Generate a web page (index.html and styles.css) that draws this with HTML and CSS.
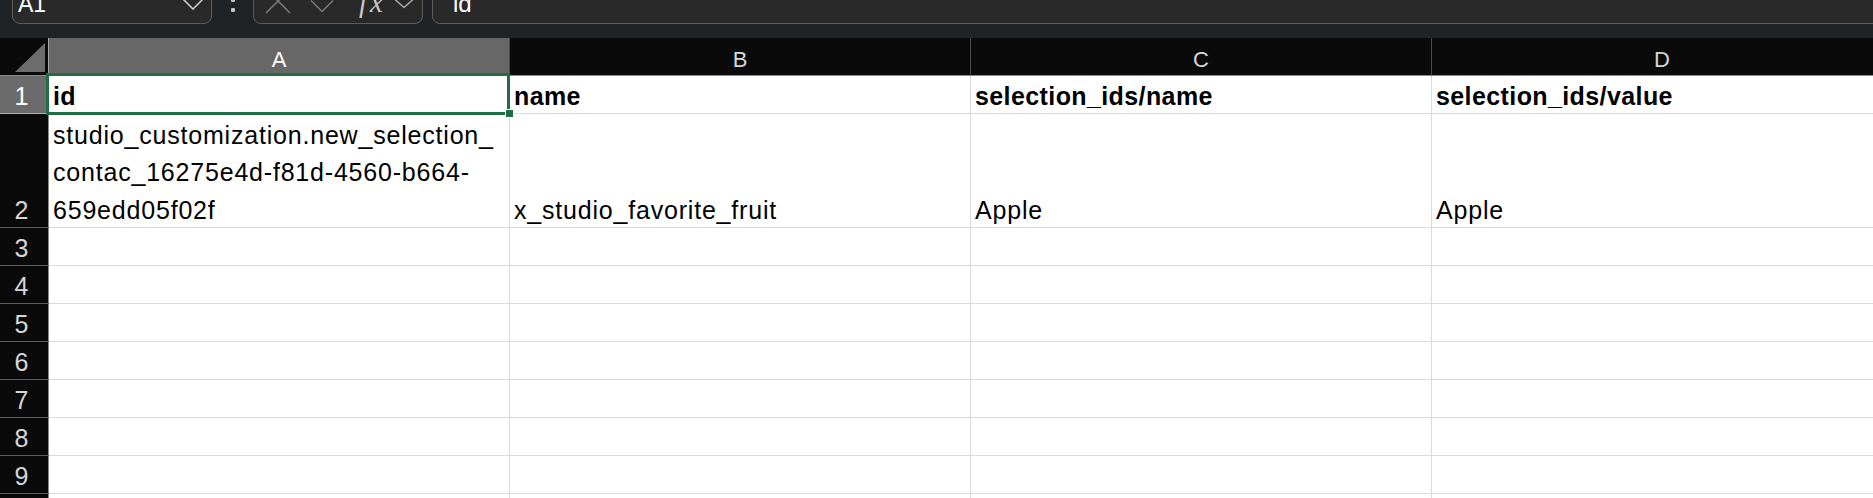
FILE: index.html
```html
<!DOCTYPE html>
<html>
<head>
<meta charset="utf-8">
<title>Sheet</title>
<link rel="stylesheet" href="styles.css">
</head>
<body>
<div class="app">
  <div class="toolbar">
    <div class="box namebox">
      <span class="ref">A1</span>
      <svg class="chev-name" width="22" height="12" viewBox="0 0 22 12"><path d="M1 1 L11 11 L21 1"/></svg>
    </div>
    <div class="kebab"><i></i><i></i></div>
    <div class="box fnbox">
      <svg class="ico-x" width="26" height="26" viewBox="0 0 26 26"><path d="M1 1 L25 25 M25 1 L1 25"/></svg>
      <svg class="ico-check" width="24" height="14" viewBox="0 0 24 14"><path d="M1 1.5 L12 12.5 L23 1.5"/></svg>
      <span class="fx">fx</span>
      <svg class="chev-fx" width="20" height="10" viewBox="0 0 20 10"><path d="M1 0.5 L10 8.5 L19 0.5"/></svg>
    </div>
    <div class="box formula"><span class="ftext">id</span></div>
  </div>

  <div class="sheet">
    <div class="corner"><svg width="48" height="37" viewBox="0 0 48 37"><polygon points="15,34 45,34 45,5" /></svg></div>
    <div class="ch sel">A</div>
    <div class="ch">B</div>
    <div class="ch">C</div>
    <div class="ch">D</div>

    <div class="rh sel"><span>1</span></div>
    <div class="c b"><span>id</span></div>
    <div class="c b"><span>name</span></div>
    <div class="c b"><span>selection_ids/name</span></div>
    <div class="c b"><span>selection_ids/value</span></div>

    <div class="rh"><span>2</span></div>
    <div class="c"><span>studio_customization.new_selection_<br>contac_16275e4d-f81d-4560-b664-<br>659edd05f02f</span></div>
    <div class="c"><span>x_studio_favorite_fruit</span></div>
    <div class="c"><span>Apple</span></div>
    <div class="c"><span>Apple</span></div>

    <div class="rh"><span>3</span></div><div class="c"></div><div class="c"></div><div class="c"></div><div class="c"></div>
    <div class="rh"><span>4</span></div><div class="c"></div><div class="c"></div><div class="c"></div><div class="c"></div>
    <div class="rh"><span>5</span></div><div class="c"></div><div class="c"></div><div class="c"></div><div class="c"></div>
    <div class="rh"><span>6</span></div><div class="c"></div><div class="c"></div><div class="c"></div><div class="c"></div>
    <div class="rh"><span>7</span></div><div class="c"></div><div class="c"></div><div class="c"></div><div class="c"></div>
    <div class="rh"><span>8</span></div><div class="c"></div><div class="c"></div><div class="c"></div><div class="c"></div>
    <div class="rh"><span>9</span></div><div class="c"></div><div class="c"></div><div class="c"></div><div class="c"></div>
    <div class="rh"><span>10</span></div><div class="c"></div><div class="c"></div><div class="c"></div><div class="c"></div>

    <div class="selection"><i class="handle"></i></div>
  </div>
</div>
</body>
</html>
```
FILE: styles.css
```css
html, body {
  margin: 0;
  padding: 0;
  background: #1f2326;
  overflow: hidden;
}

.app {
  width: 1873px;
  height: 498px;
  overflow: hidden;
  font-family: "Liberation Sans", Arial, sans-serif;
}

/* ---------- toolbar ---------- */
.toolbar {
  height: 38px;
  box-sizing: border-box;
  display: flex;
  align-items: flex-start;
  padding-left: 12px;
  background: #1f2326;
  overflow: hidden;
}

.box {
  box-sizing: border-box;
  height: 36px;
  margin-top: -12px;
  border: 1px solid #5d5d5d;
  border-radius: 8px;
  background: #292929;
  display: flex;
  align-items: flex-start;
  flex-shrink: 0;
}

.namebox {
  width: 200px;
  padding-left: 5px;
}

.ref {
  font-size: 23px;
  line-height: 30px;
  color: #ffffff;
}

.chev-name {
  margin-left: auto;
  margin-right: 7px;
  margin-top: 9px;
}

.chev-name path,
.chev-fx path,
.ico-x path,
.ico-check path {
  fill: none;
  stroke-width: 1.5;
}

.chev-name path { stroke: #cfcfcf; }
.chev-fx path { stroke: #a8a8a8; }
.ico-x path, .ico-check path { stroke: #7a7a7a; }

.kebab {
  width: 4px;
  margin-left: 19px;
  margin-top: -2px;
  display: flex;
  flex-direction: column;
  gap: 6px;
  flex-shrink: 0;
}

.kebab i {
  display: block;
  width: 4px;
  height: 4px;
  border-radius: 1px;
  background: #c4c4c4;
}

.fnbox {
  width: 170px;
  margin-left: 18px;
}

.ico-x {
  margin-left: 11px;
  margin-top: -1px;
}

.ico-check {
  margin-left: 19px;
  margin-top: 10px;
}

.fx {
  margin-left: 25px;
  margin-top: -1px;
  font-family: "Liberation Serif", "Times New Roman", serif;
  font-style: italic;
  font-size: 29px;
  line-height: 28px;
  letter-spacing: 3px;
  color: #c8c8c8;
}

.chev-fx {
  margin-left: 8px;
  margin-top: 10px;
}

.formula {
  flex: 1;
  margin-left: 9px;
  margin-right: -20px;
  padding-left: 20px;
}

.ftext {
  font-size: 24px;
  line-height: 30px;
  color: #ffffff;
}

/* ---------- sheet ---------- */
.sheet {
  position: relative;
  display: grid;
  grid-template-columns: 49px repeat(4, 461px);
  grid-template-rows: 38px 38px 114px repeat(8, 38px);
  height: 460px;
  overflow: hidden;
  background: #ffffff;
}

.corner {
  background: #0a0a0a;
  border-right: 1px solid #a8a8a8;
  border-bottom: 1px solid #8c8c8c;
  box-sizing: border-box;
}

.corner svg {
  display: block;
}

.corner polygon {
  fill: #6c6c6c;
}

.ch {
  box-sizing: border-box;
  background: #0a0a0a;
  color: #d6d6d6;
  border-right: 1px solid #4a4a4a;
  border-bottom: 1px solid #8c8c8c;
  display: flex;
  align-items: flex-end;
  justify-content: center;
  font-size: 22px;
  line-height: 22px;
  padding-bottom: 4px;
}

.ch.sel {
  background: #676767;
  color: #ffffff;
}

.rh {
  box-sizing: border-box;
  background: #0a0a0a;
  color: #d6d6d6;
  border-right: 1px solid #8a8a8a;
  border-bottom: 1px solid #5f5f5f;
  display: flex;
  align-items: flex-end;
  justify-content: center;
  padding-right: 5px;
  font-size: 25px;
  line-height: 33px;
}

.rh.sel {
  background: #6b6b6b;
  color: #ffffff;
  border-bottom-color: #b0b0b0;
}

.c {
  box-sizing: border-box;
  background: #ffffff;
  border-right: 1px solid #dadada;
  border-bottom: 1px solid #dadada;
  display: flex;
  align-items: flex-end;
  padding-left: 4px;
  font-size: 25px;
  line-height: 37.5px;
  letter-spacing: 0.8px;
  color: #000000;
  white-space: nowrap;
}

.c > span {
  margin-bottom: -2px;
}

.c.b {
  font-weight: bold;
  letter-spacing: 0.4px;
}

.selection {
  position: absolute;
  left: 46px;
  top: 35px;
  width: 464px;
  height: 42px;
  box-sizing: border-box;
  border: 3px solid #1f6e43;
  pointer-events: none;
}

.handle {
  position: absolute;
  left: 456px;
  top: 33px;
  width: 9px;
  height: 9px;
  box-sizing: border-box;
  background: #1f6e43;
  border: 1px solid #ffffff;
}
```
